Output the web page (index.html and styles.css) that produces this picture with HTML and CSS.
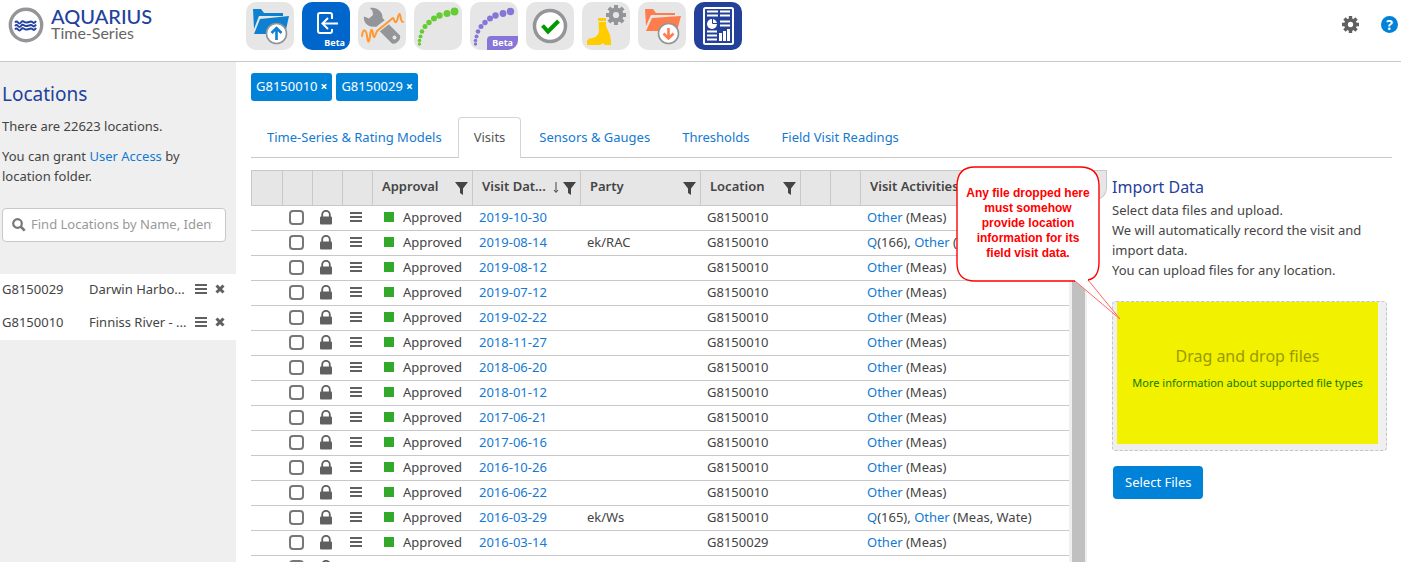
FILE: index.html
```
<!DOCTYPE html>
<html lang="en">
<head>
<meta charset="utf-8">
<title>AQUARIUS Time-Series</title>
<link rel="stylesheet" href="styles.css">
</head>
<body>
<svg class="defs" aria-hidden="true">
  <symbol id="lock" viewBox="0 0 12 15"><path d="M2.2 7V4.6a3.8 3.8 0 0 1 7.6 0V7" fill="none" stroke="currentColor" stroke-width="1.8"/><rect y="6.5" width="12" height="8" rx="1" fill="currentColor"/></symbol>
  <symbol id="menu" viewBox="0 0 12 12"><path d="M0 1h12v2H0zM0 5h12v2H0zM0 9h12v2H0z" fill="currentColor"/></symbol>
  <symbol id="cross" viewBox="0 0 10 10"><path d="M1.5 1.5l7 7M8.5 1.5l-7 7" stroke="currentColor" stroke-width="3"/></symbol>
  <symbol id="funnel" viewBox="0 0 13 13"><path d="M0 0h13L8 6.500V13L5 11V6.500z" fill="currentColor"/></symbol>
  <symbol id="gear" viewBox="0 0 20 20"><g fill="none" stroke="currentColor"><circle cx="10" cy="10" r="5.3" stroke-width="4.400"/><path d="M10 0v4M10 16v4M0 10h4M16 10h4M2.900 2.900l3 3M14.100 14.100l3 3M2.900 17.100l3-3M14.100 5.900l3-3" stroke-width="4"/></g></symbol>
</svg>

<header class="topbar">
  <a class="brand" href="#">
    <svg class="brand-mark" viewBox="0 0 36 36" aria-hidden="true"><circle cx="18" cy="18" r="15.700" fill="#fff" stroke="#939598" stroke-width="3.400"/><g fill="none" stroke="#2343a0" stroke-width="2"><path id="wave" d="M7 15.500q1.500-2 3 0t3 0 3-.8 3 .8 3-.8 3 .8 3-1.500"/><use href="#wave" y="3.500"/><use href="#wave" y="7"/></g></svg>
    <span class="brand-text"><span class="brand-name">AQUARIUS</span><span class="brand-sub">Time-Series</span></span>
  </a>
  <nav class="apps" aria-label="Tools">
    <button class="app" aria-label="Upload"><svg viewBox="0 0 48 48"><path d="M7 7h8l3 4h19v3H13L8 27z" fill="#0e80d2"/><path d="M14 17l29-3-4 18H8z" fill="#0e80d2"/><circle cx="30.500" cy="31.500" r="10" fill="#fff" stroke="#939598" stroke-width="1.600"/><path d="M30.500 38V27M25.500 31l5-5 5 5" fill="none" stroke="#0e80d2" stroke-width="2.600"/></svg></button>
    <button class="app app-blue" aria-label="Import beta"><svg viewBox="0 0 48 48"><path d="M30 17v-4q0-2-2-2H18q-2 0-2 2v16q0 2 2 2h10q2 0 2-2v-2M36 21.500H21M26 16l-5.500 5.500L26 27" fill="none" stroke="#fff" stroke-width="2"/></svg><span class="beta">Beta</span></button>
    <button class="app" aria-label="Toolbox"><svg viewBox="0 0 48 48"><path d="M12 6c7-1 13 4 12.500 10L42 33.500q1 3-2 6t-6 2L17 24.500C10 26 5 20 6 14.500l5 2 4-3.500-.5-4z" fill="#939598"/><circle cx="36.500" cy="35.500" r="2" fill="#e6e6e6"/><g fill="none" stroke-linejoin="round" stroke-linecap="round"><path d="M15 31L33 17" stroke="#e6e6e6" stroke-width="6"/><path d="M4 34C5 26 8 27 9 34s2 8 3 0 2-8 3-2 2 2 4-3L30 20c3-2 4-4 5-4s1 5 3 4 2-8 3.500-8 .5 8 3.500 8" stroke="#f93" stroke-width="2"/></g></svg></button>
    <button class="app" aria-label="Rating curves"><svg viewBox="0 0 48 48"><g fill="#6c3"><circle cx="5.500" cy="42" r="1.700"/><circle cx="5.500" cy="38.500" r="1.800"/><circle cx="6.500" cy="34.500" r="2"/><circle cx="8" cy="29.500" r="2.300"/><circle cx="11" cy="24.500" r="2.500"/><circle cx="15" cy="20.500" r="2.700"/><circle cx="20" cy="16.500" r="3"/><circle cx="25.500" cy="13.500" r="3.200"/><circle cx="33" cy="11.500" r="3.500"/><circle cx="40.500" cy="9.500" r="3.900"/></g></svg></button>
    <button class="app" aria-label="Rating curves beta"><svg viewBox="0 0 48 48"><g fill="#8776d8"><circle cx="5.500" cy="42" r="1.700"/><circle cx="5.500" cy="38.500" r="1.800"/><circle cx="6.500" cy="34.500" r="2"/><circle cx="8" cy="29.500" r="2.300"/><circle cx="11" cy="24.500" r="2.500"/><circle cx="15" cy="20.500" r="2.700"/><circle cx="20" cy="16.500" r="3"/><circle cx="25.500" cy="13.500" r="3.200"/><circle cx="33" cy="11.500" r="3.400"/><circle cx="40.500" cy="9.500" r="3.700"/></g></svg><span class="beta beta-purple">Beta</span></button>
    <button class="app" aria-label="Approvals"><svg viewBox="0 0 48 48"><circle cx="24" cy="24" r="15.500" fill="#fff" stroke="#939598" stroke-width="3.500"/><path d="M16.500 23.500l5.500 6L32.500 19" fill="none" stroke="#090" stroke-width="4"/></svg></button>
    <button class="app" aria-label="Field visits"><svg viewBox="0 0 48 48"><path d="M16 16h8v3h-8zM16.500 20H24v4l4 9 1 6v4h-7v-2l-4 2H5v-4q1-3 6-3 6-2 6-8z" fill="#fc0"/><svg x="24" y="3" width="20" height="20" color="#939598"><use href="#gear"/></svg></svg></button>
    <button class="app" aria-label="Download"><svg viewBox="0 0 48 48"><path d="M7 7h8l3 4h19v2H13L8 24z" fill="#ff7c4d"/><path d="M14 16l29-2-4 15H8z" fill="#ff7c4d"/><circle cx="30.500" cy="31.500" r="10" fill="#fff" stroke="#939598" stroke-width="1.600"/><path d="M30.500 26v10M25.500 31.500l5 5 5-5" fill="none" stroke="#ff7c4d" stroke-width="2.600"/></svg></button>
    <button class="app app-navy" aria-label="Reports"><svg viewBox="0 0 48 48"><rect x="10" y="6" width="29" height="36" rx="1.500" fill="none" stroke="#fff" stroke-width="2"/><path d="M13 9.500h11M26 9.500h10M13 13.500h11M26 13.500h10M26 19.500h10M26 23.500h10M13 29.500h10M13 33.500h10M13 37.500h10" stroke="#fff" stroke-width="1.800"/><path d="M25 31h3v8h-3zM29 29h3v10h-3zM33 27h3v12h-3z" fill="#fff"/><circle cx="18" cy="22" r="5" fill="#fff"/><path d="M18.500 17v4.500H23" fill="none" stroke="#23419b"/></svg></button>
  </nav>
  <div class="tools">
    <button class="plain" aria-label="Settings"><svg class="i17"><use href="#gear"/></svg></button>
    <button class="help" aria-label="Help">?</button>
  </div>
</header>

<div class="body">
  <aside class="sidebar">
    <h1>Locations</h1>
    <p>There are 22623 locations.</p>
    <p>You can grant <a href="#">User Access</a> by location folder.</p>
    <label class="search"><svg viewBox="0 0 14 14" aria-hidden="true"><circle cx="5.500" cy="5.500" r="4.300" fill="none" stroke="#777" stroke-width="2.200"/><path d="M8.700 8.700l4 4" stroke="#777" stroke-width="2.600"/></svg><input type="text" aria-label="Find locations" placeholder="Find Locations by Name, Identifier"></label>
    <ul class="places">
      <li><span class="code">G8150029</span><span class="place">Darwin Harbo...</span><button class="plain" aria-label="Menu"><svg class="i12"><use href="#menu"/></svg></button><button class="plain" aria-label="Remove"><svg class="i10"><use href="#cross"/></svg></button></li>
      <li><span class="code">G8150010</span><span class="place">Finniss River - ...</span><button class="plain" aria-label="Menu"><svg class="i12"><use href="#menu"/></svg></button><button class="plain" aria-label="Remove"><svg class="i10"><use href="#cross"/></svg></button></li>
    </ul>
  </aside>

  <main class="main">
    <div class="chips"><button class="chip">G8150010<b>×</b></button><button class="chip">G8150029<b>×</b></button></div>
    <nav class="tabs">
      <a href="#">Time-Series &amp; Rating Models</a>
      <a class="active" href="#" aria-current="page">Visits</a>
      <a href="#">Sensors &amp; Gauges</a>
      <a href="#">Thresholds</a>
      <a href="#">Field Visit Readings</a>
    </nav>
    <div class="content">
      <table class="grid">
        <colgroup><col class="c-first"><col class="c-icon"><col class="c-icon"><col class="c-icon"><col class="c-100"><col class="c-date"><col class="c-party"><col class="c-100"><col class="c-icon"><col class="c-icon"><col><col class="c-bar"></colgroup>
        <thead><tr><th></th><th></th><th></th><th></th>
          <th><div class="head">Approval<svg class="i13"><use href="#funnel"/></svg></div></th>
          <th><div class="head">Visit Dat...<span class="sort"><svg viewBox="0 0 6 12" width="6" height="12" aria-label="Sorted descending"><path d="M3 0v10M1 8l2 2.500L5 8" fill="none" stroke="currentColor"/></svg><svg class="i13"><use href="#funnel"/></svg></span></div></th>
          <th><div class="head">Party<svg class="i13"><use href="#funnel"/></svg></div></th>
          <th><div class="head">Location<svg class="i13"><use href="#funnel"/></svg></div></th>
          <th></th><th></th><th colspan="2"><div class="head">Visit Activities</div></th></tr></thead>
        <tbody>
        <tr><td></td><td><input type="checkbox" aria-label="Select"></td><td><svg class="lock"><use href="#lock"/></svg></td><td><svg class="i12"><use href="#menu"/></svg></td><td><span class="ok">Approved</span></td><td><a href="#">2019-10-30</a></td><td></td><td>G8150010</td><td></td><td></td><td><a href="#">Other</a> (Meas)</td><td class="bar" rowspan="15"></td></tr>
        <tr><td></td><td><input type="checkbox" aria-label="Select"></td><td><svg class="lock"><use href="#lock"/></svg></td><td><svg class="i12"><use href="#menu"/></svg></td><td><span class="ok">Approved</span></td><td><a href="#">2019-08-14</a></td><td>ek/RAC</td><td>G8150010</td><td></td><td></td><td><a href="#">Q</a>(166), <a href="#">Other</a> (T</td></tr>
        <tr><td></td><td><input type="checkbox" aria-label="Select"></td><td><svg class="lock"><use href="#lock"/></svg></td><td><svg class="i12"><use href="#menu"/></svg></td><td><span class="ok">Approved</span></td><td><a href="#">2019-08-12</a></td><td></td><td>G8150010</td><td></td><td></td><td><a href="#">Other</a> (Meas)</td></tr>
        <tr><td></td><td><input type="checkbox" aria-label="Select"></td><td><svg class="lock"><use href="#lock"/></svg></td><td><svg class="i12"><use href="#menu"/></svg></td><td><span class="ok">Approved</span></td><td><a href="#">2019-07-12</a></td><td></td><td>G8150010</td><td></td><td></td><td><a href="#">Other</a> (Meas)</td></tr>
        <tr><td></td><td><input type="checkbox" aria-label="Select"></td><td><svg class="lock"><use href="#lock"/></svg></td><td><svg class="i12"><use href="#menu"/></svg></td><td><span class="ok">Approved</span></td><td><a href="#">2019-02-22</a></td><td></td><td>G8150010</td><td></td><td></td><td><a href="#">Other</a> (Meas)</td></tr>
        <tr><td></td><td><input type="checkbox" aria-label="Select"></td><td><svg class="lock"><use href="#lock"/></svg></td><td><svg class="i12"><use href="#menu"/></svg></td><td><span class="ok">Approved</span></td><td><a href="#">2018-11-27</a></td><td></td><td>G8150010</td><td></td><td></td><td><a href="#">Other</a> (Meas)</td></tr>
        <tr><td></td><td><input type="checkbox" aria-label="Select"></td><td><svg class="lock"><use href="#lock"/></svg></td><td><svg class="i12"><use href="#menu"/></svg></td><td><span class="ok">Approved</span></td><td><a href="#">2018-06-20</a></td><td></td><td>G8150010</td><td></td><td></td><td><a href="#">Other</a> (Meas)</td></tr>
        <tr><td></td><td><input type="checkbox" aria-label="Select"></td><td><svg class="lock"><use href="#lock"/></svg></td><td><svg class="i12"><use href="#menu"/></svg></td><td><span class="ok">Approved</span></td><td><a href="#">2018-01-12</a></td><td></td><td>G8150010</td><td></td><td></td><td><a href="#">Other</a> (Meas)</td></tr>
        <tr><td></td><td><input type="checkbox" aria-label="Select"></td><td><svg class="lock"><use href="#lock"/></svg></td><td><svg class="i12"><use href="#menu"/></svg></td><td><span class="ok">Approved</span></td><td><a href="#">2017-06-21</a></td><td></td><td>G8150010</td><td></td><td></td><td><a href="#">Other</a> (Meas)</td></tr>
        <tr><td></td><td><input type="checkbox" aria-label="Select"></td><td><svg class="lock"><use href="#lock"/></svg></td><td><svg class="i12"><use href="#menu"/></svg></td><td><span class="ok">Approved</span></td><td><a href="#">2017-06-16</a></td><td></td><td>G8150010</td><td></td><td></td><td><a href="#">Other</a> (Meas)</td></tr>
        <tr><td></td><td><input type="checkbox" aria-label="Select"></td><td><svg class="lock"><use href="#lock"/></svg></td><td><svg class="i12"><use href="#menu"/></svg></td><td><span class="ok">Approved</span></td><td><a href="#">2016-10-26</a></td><td></td><td>G8150010</td><td></td><td></td><td><a href="#">Other</a> (Meas)</td></tr>
        <tr><td></td><td><input type="checkbox" aria-label="Select"></td><td><svg class="lock"><use href="#lock"/></svg></td><td><svg class="i12"><use href="#menu"/></svg></td><td><span class="ok">Approved</span></td><td><a href="#">2016-06-22</a></td><td></td><td>G8150010</td><td></td><td></td><td><a href="#">Other</a> (Meas)</td></tr>
        <tr><td></td><td><input type="checkbox" aria-label="Select"></td><td><svg class="lock"><use href="#lock"/></svg></td><td><svg class="i12"><use href="#menu"/></svg></td><td><span class="ok">Approved</span></td><td><a href="#">2016-03-29</a></td><td>ek/Ws</td><td>G8150010</td><td></td><td></td><td><a href="#">Q</a>(165), <a href="#">Other</a> (Meas, Wate)</td></tr>
        <tr><td></td><td><input type="checkbox" aria-label="Select"></td><td><svg class="lock"><use href="#lock"/></svg></td><td><svg class="i12"><use href="#menu"/></svg></td><td><span class="ok">Approved</span></td><td><a href="#">2016-03-14</a></td><td></td><td>G8150029</td><td></td><td></td><td><a href="#">Other</a> (Meas)</td></tr>
        <tr><td></td><td><input type="checkbox" aria-label="Select"></td><td><svg class="lock"><use href="#lock"/></svg></td><td></td><td></td><td></td><td></td><td></td><td></td><td></td><td></td></tr>
        </tbody>
      </table>
      <div class="flap"></div>
      <section class="import">
        <h2>Import Data</h2>
        <p>Select data files and upload.<br>We will automatically record the visit and import data.<br>You can upload files for any location.</p>
        <div class="drop"><div class="drop-inner"><span class="drop-title">Drag and drop files</span><a href="#">More information about supported file types</a></div></div>
        <button class="select">Select Files</button>
        <div class="callout">
          <svg viewBox="0 0 166 155" aria-hidden="true"><path d="M19 1h105q19 0 19 19v76q0 16-11 18l32 39-45-38H19Q1 115 1 97V20Q1 1 19 1z" fill="#fff"/><path d="M119 115l45 38-32-39" fill="none" stroke="#f66"/><path d="M119 115H19Q1 115 1 97V20Q1 1 19 1h105q19 0 19 19v76q0 16-11 18" fill="none" stroke="#f00" stroke-width="1.400"/></svg>
          <p>Any file dropped here<br>must somehow<br>provide location<br>information for its<br>field visit data.</p>
        </div>
      </section>
    </div>
  </main>
</div>
</body>
</html>
```
FILE: styles.css
```
* { box-sizing: border-box; }
body {
  margin: 0;
  height: 100vh;
  display: flex;
  flex-direction: column;
  overflow: hidden;
  font: 13px/20px "Noto Sans", "Open Sans", sans-serif;
  color: #444;
  background: #fff;
}
a { color: #1479d2; text-decoration: none; }
button, input { font: inherit; color: inherit; }
button { border: 0; padding: 0; background: none; cursor: pointer; }
svg { display: block; }
h1, h2, p, ul { margin: 0; padding: 0; font-weight: 400; }
.defs { position: absolute; width: 0; height: 0; }
.i17 { width: 17px; height: 17px; }
.i13 { width: 13px; height: 13px; }
.i12 { width: 12px; height: 12px; }
.i10 { width: 10px; height: 10px; }
.lock { width: 12px; height: 15px; }

.topbar { flex: none; height: 62px; display: flex; align-items: flex-start; border-bottom: 1px solid #c8c8c8; }
.brand { display: flex; gap: 7px; width: 246px; padding: 7px 0 0 8px; }
.brand-mark { width: 36px; height: 36px; }
.brand-text { display: flex; flex-direction: column; font-family: Lato, sans-serif; }
.brand-name { font-size: 20px; line-height: 18px; font-weight: 500; color: #23419b; }
.brand-sub { font-size: 16px; line-height: 16px; color: #666; }
.apps { display: flex; gap: 8px; padding-top: 2px; }
.app { position: relative; width: 48px; height: 48px; border-radius: 10px; background: #e6e6e6; overflow: hidden; }
.app > svg { width: 48px; height: 48px; }
.app-blue { background: #06c; }
.app-navy { background: #23419b; }
.beta { position: absolute; right: 0; bottom: 0; padding: 0 5px; font-size: 9px; line-height: 14px; font-weight: 700; color: #fff; }
.beta-purple { background: #8776d8; border-radius: 4px 0 0 0; }
.tools { margin-left: auto; display: flex; gap: 22px; padding: 16px 3px 0 0; }
.help { width: 17px; height: 17px; border-radius: 50%; background: #0082d9; color: #fff; font-weight: 700; font-size: 14px; line-height: 17px; }

.body { flex: 1; min-height: 0; display: flex; }
.sidebar { flex: none; width: 236px; background: #efefef; padding-top: 18px; }
h1 { font-size: 19px; line-height: 28px; color: #23419b; padding-left: 2px; }
.sidebar p { padding: 0 40px 0 2px; margin-top: 10px; }
.sidebar h1 + p { margin-top: 8px; }
.search { display: flex; align-items: center; height: 34px; margin: 22px 10px 0 2px; padding: 0 13px 2px 9px; gap: 5px; border: 1px solid #c8c8c8; border-radius: 4px; background: #fff; }
.search svg { flex: none; width: 14px; height: 14px; margin-top: 2px; }
.search input { flex: 1; min-width: 0; border: 0; padding: 0; background: none; outline: 0; }
.search input::placeholder { color: #999; }
.places { margin-top: 32px; background: #fff; list-style: none; }
.places li { display: flex; align-items: center; height: 33px; padding: 0 11px 3px 2px; }
.code { width: 87px; }
.place { flex: 1; white-space: nowrap; }
.plain { color: #606060; }
.places .plain + .plain { margin-left: 8px; }

.main { flex: 1; min-width: 0; padding: 11px 9px 0 15px; display: flex; flex-direction: column; }
.chips { display: flex; gap: 4px; }
.chip { height: 28px; padding: 0 5px 1px; border-radius: 3px; background: #0082d9; color: #fff; }
.chip b { font-size: 12px; margin-left: 3px; }
.tabs { display: flex; margin-top: 16px; border-bottom: 1px solid #c8c8c8; }
.tabs a { height: 40px; padding: 9px 15px; border: 1px solid transparent; border-bottom: 0; white-space: nowrap; }
.tabs .active { height: 41px; margin: 0 2px -1px 0; background: #fff; border-color: #d4d4d4; border-radius: 4px 4px 0 0; color: #555; }
.content { flex: 1; min-height: 0; display: flex; align-items: flex-start; margin-top: 12px; }

.grid { flex: 1; min-width: 0; table-layout: fixed; border-collapse: separate; border-spacing: 0; }
.c-first { width: 32px; }
.c-icon { width: 30px; }
.c-100 { width: 100px; }
.c-date { width: 108px; }
.c-party { width: 120px; }
.c-bar { width: 18px; }
th { height: 36px; padding: 0; background: #e6e6e6; border: 1px solid #c8c8c8; border-left: 0; text-align: left; white-space: nowrap; }
th:first-child { border-left: 1px solid #c8c8c8; }
th:last-child { border-right: 0; }
.head { display: flex; justify-content: space-between; align-items: center; padding: 0 4px 4px 9px; font-weight: 600; }
.head svg { margin-top: 4px; }
.sort { display: flex; gap: 4px; }
td { height: 25px; padding: 0 6px 2px; border-bottom: 1px solid #c8c8c8; white-space: nowrap; overflow: hidden; }
td svg { margin: 0 auto; color: #606060; }
td:nth-child(-n+4) { padding: 0 4px 2px 0; }
td input { appearance: none; display: block; width: 15px; height: 15px; margin: 0 auto; border: 2px solid #777; border-radius: 4px; background: #fff; }
.ok { display: flex; align-items: center; gap: 9px; padding-left: 5px; }
.ok::before { content: ""; width: 10px; height: 10px; background: #33a92b; }
td.bar { padding: 0; border: 0 solid #efefef; border-width: 0 2px 0 3px; background: #c0c0c0; }
.flap { flex: none; width: 20px; height: 30px; background: #e6e6e6; border: 1px solid #c8c8c8; border-left: 0; border-radius: 0 0 12px 0; }

.import { position: relative; flex: none; width: 280px; padding: 4px 5px 0 0; margin-left: 5px; }
h2 { font-size: 16px; line-height: 26px; color: #23419b; }
.drop { height: 150px; margin-top: 21px; padding: 0 8px 6px 4px; border: 1px dashed #c4c4c4; border-radius: 4px; background: #efefef; }
.drop-inner { height: 142px; padding-top: 42px; display: flex; flex-direction: column; align-items: center; background: #f1f100; }
.drop-title { font-size: 16px; line-height: 24px; color: #9a9a00; }
.drop a { font-size: 11px; line-height: 18px; margin-top: 6px; color: #117a00; white-space: nowrap; }
.select { height: 33px; margin: 15px 0 0 1px; padding: 0 12px 2px; border-radius: 4px; background: #0082d9; color: #fff; }
.callout { position: absolute; left: -156px; top: -4px; width: 166px; }
.callout p { position: absolute; left: 0; top: 20px; width: 144px; text-align: center; font: 700 12px/15px "Liberation Sans", Arial, sans-serif; color: #f00; }
```
